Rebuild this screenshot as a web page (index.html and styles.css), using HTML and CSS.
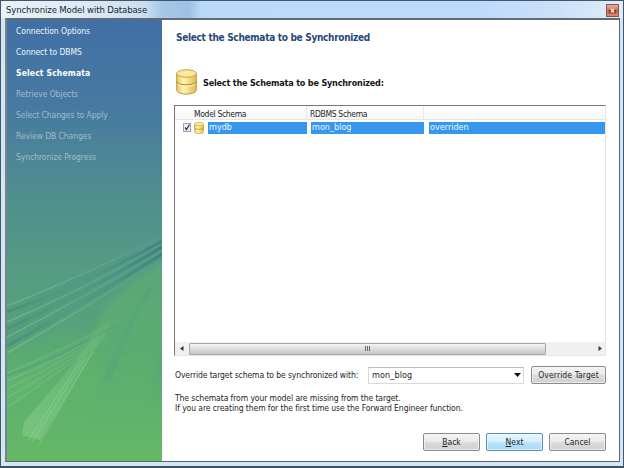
FILE: index.html
```html
<!DOCTYPE html>
<html lang="en">
<head>
<meta charset="utf-8">
<title>Synchronize Model with Database</title>
<link rel="stylesheet" href="styles.css">
</head>
<body>
<div class="window">
  <header class="titlebar">
    <span class="caption">Synchronize Model with Database</span>
    <span class="close"><svg width="13" height="13" viewBox="0 0 13 13"><rect x="2" y="5.5" width="9" height="4.5" fill="#98382c"/><path d="M4.5 4.5l4 4.5M8.5 4.5l-4 4.5" stroke="#f6dcd5" stroke-width="1.8"/></svg></span>
  </header>
  <div class="client">
    <nav class="sidebar">
      <svg class="rays" width="155" height="441" viewBox="0 0 155 441">
        <defs>
          <linearGradient id="leaf" x1="0" y1="0" x2="0" y2="1"><stop offset="0" stop-color="#5cab72" stop-opacity=".75"/><stop offset=".5" stop-color="#60b36c" stop-opacity=".5"/><stop offset="1" stop-color="#64b868" stop-opacity="0"/></linearGradient>
          <linearGradient id="fade" x1="0" y1="0" x2="1" y2="0"><stop offset="0" stop-color="#83c995" stop-opacity=".5"/><stop offset="1" stop-color="#83c995" stop-opacity=".06"/></linearGradient>
          <linearGradient id="dark" x1="0" y1="0" x2="1" y2="0"><stop offset="0" stop-color="#36817b" stop-opacity=".45"/><stop offset=".45" stop-color="#458d86" stop-opacity=".08"/><stop offset="1" stop-color="#34727d" stop-opacity=".6"/></linearGradient>
          <linearGradient id="plume" x1="0" y1="1" x2="1" y2="0"><stop offset="0" stop-color="#8fd295" stop-opacity=".5"/><stop offset="1" stop-color="#8fd295" stop-opacity=".03"/></linearGradient>
          <linearGradient id="meadow" x1="0" y1="0" x2="0" y2="1"><stop offset="0" stop-color="#60b36c" stop-opacity="0"/><stop offset=".5" stop-color="#60b36c" stop-opacity=".7"/><stop offset="1" stop-color="#64b868" stop-opacity="0"/></linearGradient>
          <filter id="soft"><feGaussianBlur stdDeviation="2"/></filter>
          <filter id="haze"><feGaussianBlur stdDeviation=".6"/></filter>
        </defs>
        <path d="M-8 330L85 300L95 350L60 441H-8Z" fill="url(#meadow)" filter="url(#soft)"/>
        <path d="M162 239L124 262L98 287L72 338L60 441H120L162 310Z" fill="url(#leaf)" filter="url(#soft)"/>
        <path d="M149 258L136 275L121 303L95 360L104 360L130 296L142 274Z" fill="#4f9e82" opacity=".3" filter="url(#haze)"/>
        <path d="M0 285L155 221V237L0 330Z" fill="#4c9789" opacity=".2"/>
        <g fill="none" stroke="url(#dark)" filter="url(#haze)"><path d="M0 292Q80 264 155 221" stroke-width="2.5"/><path d="M0 309Q80 272 155 227" stroke-width="3"/><path d="M0 326Q80 282 155 234" stroke-width="3"/></g>
        <g fill="none" stroke="url(#fade)" stroke-width="1.5"><path d="M0 286Q80 254 155 217"/><path d="M0 302Q80 268 155 224"/><path d="M0 317Q80 276 155 231"/><path d="M0 333Q80 287 155 239"/></g>
        <path d="M0 355L103 302L98 320L0 388Z" fill="#79c387" opacity=".12"/>
        <path d="M0 356Q55 336 108 306" fill="none" stroke="#3f8c7d" stroke-opacity=".45"/>
        <g fill="none" stroke="url(#fade)" stroke-width="1.2"><path d="M0 353Q55 330 104 304"/><path d="M0 361Q55 339 106 307"/><path d="M0 369Q55 343 105 310"/><path d="M0 378Q55 346 104 314"/><path d="M0 388Q45 357 100 318"/></g>
        <path d="M15 415L17 402L68 342L98 300L105 301L84 337L33 420Z" fill="url(#plume)"/>
        <g stroke="#a5dcac" stroke-opacity=".4" stroke-width="1"><path d="M21 421L74 340"/><path d="M25 422L79 337"/><path d="M33 423L86 331"/></g>
      </svg>
      <ul class="steps">
        <li class="done">Connection Options</li>
        <li class="done">Connect to DBMS</li>
        <li class="current">Select Schemata</li>
        <li>Retrieve Objects</li>
        <li>Select Changes to Apply</li>
        <li>Review DB Changes</li>
        <li>Synchronize Progress</li>
      </ul>
    </nav>
    <main class="page">
      <h1>Select the Schemata to be Synchronized</h1>
      <div class="section">
        <svg width="21" height="26" viewBox="0 0 21 26">
          <defs><linearGradient id="gold"><stop offset="0" stop-color="#e9c765"/><stop offset=".35" stop-color="#fff5ae"/><stop offset="1" stop-color="#e3b94b"/></linearGradient></defs>
          <path d="M.7 4.5V21C.7 26.5 20.3 26.5 20.3 21V4.5Z" fill="url(#gold)" stroke="#bb994b"/>
          <ellipse cx="10.5" cy="4.5" rx="9.8" ry="3.8" fill="#fbe99b" stroke="#c2a252"/>
          <path d="M.7 12.5C2 17 19 17 20.3 12.5" fill="none" stroke="#b29042" stroke-width="1.2"/>
          <path d="M1.5 14.5C4 18 17 18 19.5 14.5" fill="none" stroke="#fff8c8"/>
        </svg>
        <h2>Select the Schemata to be Synchronized:</h2>
      </div>
      <section class="list">
        <div class="row head"><span class="c1">Model Schema</span><span class="c2">RDBMS Schema</span><span class="c3"></span></div>
        <div class="row item">
          <span class="check"><svg width="8" height="9" viewBox="0 0 8 9"><rect x=".5" y=".5" width="7" height="8" fill="#edf0f4" stroke="#9da3ad"/><path d="M2 4.5l1.5 2L6.5 1.5" fill="none" stroke="#353b60" stroke-width="1.3"/></svg></span>
          <svg class="db" width="10" height="12" viewBox="0 0 21 26"><path d="M.7 4.5V21C.7 26.5 20.3 26.5 20.3 21V4.5Z" fill="url(#gold)" stroke="#cba548" stroke-width="1.6"/><ellipse cx="10.5" cy="4.5" rx="9.8" ry="3.8" fill="#fbe99b" stroke="#cba548" stroke-width="1.5"/><path d="M.7 12.5C2 17 19 17 20.3 12.5" fill="none" stroke="#c39b3d" stroke-width="2"/></svg>
          <span class="cell s1">mydb</span><span class="cell s2">mon_blog</span><span class="cell s3">overriden</span>
        </div>
        <div class="scroll">
          <span class="arrow"><svg width="4" height="5"><path d="M3.5 0v5L0 2.5Z" fill="#333"/></svg></span>
          <span class="thumb"><i></i><i></i><i></i></span>
          <span class="arrow right"><svg width="4" height="5"><path d="M.5 0v5L4 2.5Z" fill="#333"/></svg></span>
        </div>
      </section>
      <div class="override">
        <label>Override target schema to be synchronized with:</label>
        <div class="combo"><span>mon_blog</span><svg width="7" height="4"><path d="M0 0h7L3.5 4Z" fill="#111"/></svg></div>
        <button class="target">Override Target</button>
      </div>
      <p class="note">The schemata from your model are missing from the target.<br>If you are creating them for the first time use the Forward Engineer function.</p>
      <footer><button><u>B</u>ack</button><button class="primary"><u>N</u>ext</button><button>Cancel</button></footer>
    </main>
  </div>
</div>
</body>
</html>
```
FILE: styles.css
```css
* { box-sizing: border-box; }
body { margin: 0; width: 624px; height: 468px; overflow: hidden; font: 8.5px/10px "DejaVu Sans Condensed", "DejaVu Sans", sans-serif; font-stretch: condensed; color: #252525; white-space: nowrap; }
h1, h2, p, ul { margin: 0; padding: 0; }
.window { width: 624px; height: 468px; padding: 1px 3px 4px 4px; border: 1px solid #43566a; border-bottom: 2px solid #3c5260; background: #d4e6f3; display: flex; flex-direction: column; }
.titlebar { height: 17px; flex: none; margin: -1px -3px 0 -4px; padding: 1px 4px 0 5px; display: flex; justify-content: space-between; align-items: center; background: linear-gradient(90deg, #e9f1f9 0, #dce9f4 90px, #c9def3 145px, #a9c8e8 160px, #9fc0e2 188px, #bbdafa 200px, #bedafb 480px, #cce1f8 560px, #dfedf9); }
.caption { font-size: 9.5px; letter-spacing: -.12px; color: #22262b; }
.close { width: 13px; height: 13px; border: 1px solid #8d5147; background: linear-gradient(#e5afa4, #c96d5b 50%, #d28a78); display: flex; align-items: center; justify-content: center; overflow: hidden; }
.client { flex: 1; min-height: 0; display: flex; border: 1px solid #596773; border-top: 2px solid #626b73; border-left: 2px solid #77848d; background: #fff; }
.sidebar { width: 155px; flex: none; position: relative; background: linear-gradient(#426fa6 0, #467aa0 90px, #4f8894 150px, #51918a 195px, #569b83 250px, #58a477 330px, #60b16c 390px, #66b966); }
.rays { position: absolute; left: 0; top: 0; }
.steps { position: relative; list-style: none; padding: 1px 9px; }
.steps li { height: 21px; line-height: 21px; color: #a0bccb; letter-spacing: -.07px; }
.steps .done { color: #edf5fb; }
.steps .current { color: #fff; font-weight: bold; letter-spacing: .16px; }
.page { width: 456px; padding: 12px 12px 10px; display: flex; flex-direction: column; }
h1 { font-size: 10px; line-height: 12px; padding-left: 2px; color: #264a77; letter-spacing: -.3px; }
.section { display: flex; align-items: center; gap: 6px; height: 26px; margin: 25px 0 10px 2px; }
.section h2 { padding-top: 2px; }
h2 { font-size: 9px; line-height: 12px; color: #161616; letter-spacing: -.19px; }
.list { width: 432px; height: 251px; flex: none; border: 1px solid #777; border-right-color: #e5e5e5; border-bottom-color: #e5e5e5; display: flex; flex-direction: column; }
.row { display: flex; }
.head { height: 14px; line-height: 17px; letter-spacing: -.33px; background: linear-gradient(#fff, #f6f7f8); border-bottom: 1px solid #e5e7e9; }
.c1 { width: 132px; padding-left: 19px; border-right: 1px solid #e5e7e9; }
.c2 { width: 117px; padding-left: 3px; border-right: 1px solid #e5e7e9; }
.item { height: 13px; margin-top: 1px; align-items: center; }
.check { width: 8px; height: 9px; margin-left: 8px; display: flex; }
.db { margin: 0 4px 0 3px; }
.cell { height: 12px; line-height: 11px; padding-left: 1px; background: #3797ed; color: #eef8ff; font-size: 9px; }
.s1 { width: 99px; margin-right: 4px; }
.s2 { width: 113px; margin-right: 5px; }
.s3 { flex: 1; }
.scroll { height: 13px; margin-top: auto; background: #f0f0f0; display: flex; align-items: center; }
.arrow { width: 14px; display: flex; justify-content: center; }
.right { margin-left: auto; width: 11px; }
.thumb { width: 357px; height: 12px; border: 1px solid #a6a6a6; border-radius: 1px; background: linear-gradient(#f4f4f4, #dedede 45%, #c7c7c7); display: flex; justify-content: center; align-items: center; gap: 1px; }
.thumb i { width: 1px; height: 5px; background: #666; }
.override { height: 18px; margin-top: 10px; display: flex; align-items: center; }
.override label { width: 194px; padding-left: 1px; letter-spacing: -.09px; }
.combo { width: 156px; height: 17px; border: 1px solid #d6dbe0; border-top-color: #b8bdc5; display: flex; align-items: center; justify-content: space-between; padding: 0 2px 0 3px; font-size: 9px; letter-spacing: .1px; }
button { width: 57px; height: 18px; padding: 0; border: 1px solid #8b8b8b; border-radius: 2px; font: inherit; line-height: 14px; color: #1e1e1e; background: linear-gradient(#f4f4f4, #eaeaea 48%, #dcdcdc 52%, #d0d0d0); box-shadow: inset 0 0 0 1px #f7f7f7aa; }
.target { width: 75px; margin-left: 7px; letter-spacing: .1px; }
.note { padding-left: 1px; margin-top: 9px; letter-spacing: -.08px; }
.primary { border-color: #568fb5; background: linear-gradient(#e6f6ff, #d5effe 48%, #bce5fc 52%, #a7d9f5); }
footer { display: flex; justify-content: flex-end; gap: 6px; margin-top: auto; }
```
